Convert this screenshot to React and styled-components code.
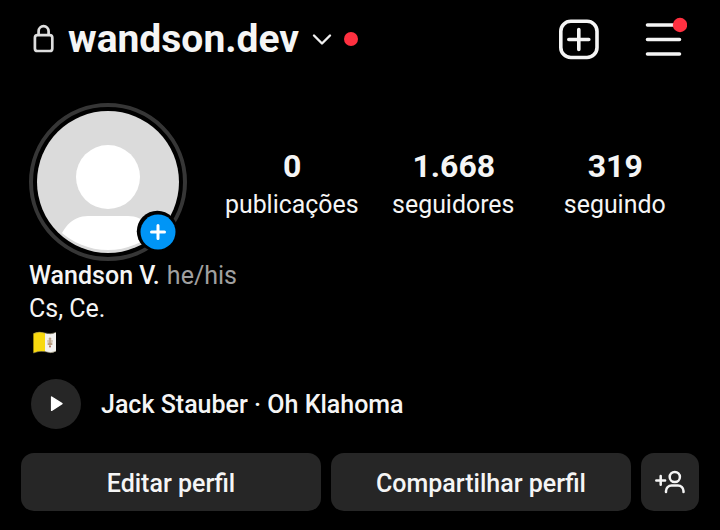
import React from "react";
import styled, { createGlobalStyle } from "styled-components";

const GlobalStyle = createGlobalStyle`
  * { box-sizing: border-box; }
  body {
    margin: 0;
    background: #000;
    color: #f5f5f5;
    font-family: Roboto, "Noto Sans", sans-serif;
  }
  button { font: inherit; color: inherit; border: 0; padding: 0; margin: 0; background: none; }
  svg { display: block; flex: none; }
`;

const Screen = styled.main`
  width: 720px;
  height: 530px;
  overflow: hidden;
  background: #000;
  display: flex;
  flex-direction: column;
`;

const Header = styled.header`
  height: 78px;
  display: flex;
  align-items: center;
  padding: 0 33px 0 30px;
`;

const Username = styled.h1`
  margin: 0 0 0 10px;
  width: 243px;
  font-size: 39px;
  font-weight: 700;
  line-height: 79px;
  height: 78px;
  white-space: nowrap;
`;

const Dot = styled.span`
  width: 14px;
  height: 14px;
  border-radius: 50%;
  background: #ff3040;
  margin-left: 11px;
`;

const Actions = styled.nav`
  display: flex;
  gap: 42px;
  margin-left: auto;
`;

const IconButton = styled.button`
  width: 44px;
  height: 48px;
  display: grid;
  place-items: center;
`;

const Summary = styled.section`
  height: 180.5px;
  padding: 25px 0 0 29px;
  display: flex;
`;

const Avatar = styled.div`
  width: 158px;
  height: 158px;
`;

const Stats = styled.div`
  display: grid;
  grid-template-columns: repeat(3, 161.5px);
  margin-left: 24px;
  padding-top: 44px;
  height: 121px;
`;

const Stat = styled.div`
  text-align: center;
`;

const StatValue = styled.div`
  font-size: 32px;
  font-weight: 700;
  height: 39px;
  line-height: 38px;
  padding-left: 1px;
`;

const StatLabel = styled.div`
  font-size: 24.9px;
  line-height: 38px;
  white-space: nowrap;
`;

const Bio = styled.section`
  height: 120.5px;
  padding-left: 29px;
  font-size: 25px;
  line-height: 33.3px;
`;

const Line = styled.div`
  height: 33.3px;
  white-space: nowrap;
`;

const Name = styled.span`
  font-weight: 500;
`;

const Pronouns = styled.span`
  color: #a0a0a0;
  margin-left: 1px;
`;

const FlagLine = styled(Line)`
  display: flex;
  align-items: center;
  padding: 3px 0 0 3px;
`;

const Song = styled.section`
  height: 50px;
  padding-left: 31px;
  display: flex;
  align-items: center;
  gap: 20px;
  font-size: 25px;
  font-weight: 500;
`;

const PlayButton = styled.button`
  width: 50px;
  height: 50px;
  border-radius: 50%;
  background: #262626;
  display: grid;
  place-items: center;
`;

const ButtonRow = styled.div`
  margin-top: 24px;
  padding: 0 21px;
  display: grid;
  grid-template-columns: 300px 300px 58px;
  gap: 10px;
`;

const ActionButton = styled.button`
  && {
    height: 58px;
    border-radius: 13px;
    background: #262626;
    display: flex;
    align-items: center;
    justify-content: center;
    font-size: 25px;
    font-weight: 500;
    padding-top: ${(p) => (p.$icon ? 0 : "2px")};
  }
`;

const LockIcon = () => (
  <svg width="28" height="34" viewBox="30 22 28 34" fill="none" stroke="#dedede" strokeWidth="2.7">
    <rect x="34.9" y="35.2" width="17.4" height="15.8" rx="2.6" />
    <path d="M38.6 35V31.2a5 5 0 0 1 10 0V35" />
  </svg>
);

const ChevronIcon = () => (
  <svg width="22" height="14" viewBox="311 32 22 14" fill="none" stroke="#f0f0f0" strokeWidth="2.4" strokeLinecap="round" strokeLinejoin="round">
    <path d="M314 35.5l8 8 8-8" />
  </svg>
);

const CreateIcon = () => (
  <svg width="44" height="44" viewBox="556.5 17 44 44" fill="none" stroke="#f5f5f5" strokeWidth="3.6" strokeLinecap="round">
    <rect x="560.3" y="21.3" width="36.2" height="36.2" rx="10" />
    <path d="M568.3 39.5h20M578.3 29.5v20" />
  </svg>
);

const MenuIcon = () => (
  <svg width="44" height="48" viewBox="643 15 44 48">
    <path d="M647.5 25h32M647.5 39.5h32M647.5 54h32" stroke="#f5f5f5" strokeWidth="3.6" strokeLinecap="round" />
    <circle cx="680" cy="25" r="7.2" fill="#ff3040" />
  </svg>
);

const AvatarArt = () => (
  <svg width="158" height="158" viewBox="29 103 158 158">
    <defs>
      <clipPath id="face"><circle cx="108" cy="179" r="71" /></clipPath>
    </defs>
    <circle cx="108" cy="182" r="77" fill="#000" stroke="#363636" strokeWidth="4" />
    <circle cx="108" cy="182" r="71" fill="#dbdbdb" />
    <circle cx="108" cy="177" r="32" fill="#fff" />
    <path clipPath="url(#face)" d="M55 260C57 232 70 216 88 216H128C146 216 159 232 161 260Z" fill="#fff" />
    <circle cx="157.3" cy="231.3" r="20.5" fill="#000" />
    <circle cx="158" cy="232" r="17.5" fill="#0095f6" />
    <path d="M151.5 232h13M158 225.5v13" stroke="#fff" strokeWidth="3" strokeLinecap="round" />
  </svg>
);

const FlagIcon = () => (
  <svg width="26" height="24" viewBox="32 331 26 24">
    <path d="M33.4 333.5Q39 331 45 333V351.6Q39 350.5 33.4 353Z" fill="#f8d90f" />
    <path d="M45 333Q51 335 56 332.3V351.2Q51 354 45 351.6Z" fill="#f3f1ef" />
    <path d="M33.4 333.5Q39 331 45 333Q51 335 56 332.3M33.4 353Q39 350.5 45 351.6Q51 354 56 351.2" fill="none" stroke="#8e8661" strokeWidth=".5" />
    <g fill="none" stroke="#b59a7c" strokeWidth="1.2">
      <path d="M50 337.5v9M47.2 341h5.6M47.6 344.4l4.8-1.6M52.4 344.4l-4.8-1.6M48.7 338.8h2.6" />
    </g>
    <circle cx="50" cy="346.6" r=".9" fill="#a55b4a" />
  </svg>
);

const PlayIcon = () => (
  <svg width="50" height="50" viewBox="31 379 50 50">
    <path d="M51.6 397v13.4L62 403.7Z" fill="#fff" stroke="#fff" strokeWidth="1.4" strokeLinejoin="round" />
  </svg>
);

const AddPersonIcon = () => (
  <svg width="58" height="58" viewBox="641 453 58 58" fill="none" stroke="#f5f5f5" strokeWidth="2.5" strokeLinecap="round">
    <circle cx="674.8" cy="477" r="5.1" />
    <path d="M666 492v-1a5.5 5.5 0 0 1 5.5-5.5h6.5a5.5 5.5 0 0 1 5.5 5.5v1M656.3 480.4h8.8M660.7 476v8.8" />
  </svg>
);

const stats = [
  ["0", "publicações"],
  ["1.668", "seguidores"],
  ["319", "seguindo"],
];

export default function App() {
  return (
    <Screen>
      <GlobalStyle />
      <Header>
        <LockIcon />
        <Username>wandson.dev</Username>
        <ChevronIcon />
        <Dot />
        <Actions>
          <IconButton aria-label="Criar"><CreateIcon /></IconButton>
          <IconButton aria-label="Menu"><MenuIcon /></IconButton>
        </Actions>
      </Header>
      <Summary>
        <Avatar><AvatarArt /></Avatar>
        <Stats>
          {stats.map(([value, label]) => (
            <Stat key={label}>
              <StatValue>{value}</StatValue>
              <StatLabel>{label}</StatLabel>
            </Stat>
          ))}
        </Stats>
      </Summary>
      <Bio>
        <Line><Name>Wandson V.</Name> <Pronouns>he/his</Pronouns></Line>
        <Line>Cs, Ce.</Line>
        <FlagLine><FlagIcon /></FlagLine>
      </Bio>
      <Song>
        <PlayButton aria-label="Tocar"><PlayIcon /></PlayButton>
        <span>Jack Stauber · Oh Klahoma</span>
      </Song>
      <ButtonRow>
        <ActionButton>Editar perfil</ActionButton>
        <ActionButton>Compartilhar perfil</ActionButton>
        <ActionButton $icon aria-label="Descobrir pessoas"><AddPersonIcon /></ActionButton>
      </ButtonRow>
    </Screen>
  );
}
